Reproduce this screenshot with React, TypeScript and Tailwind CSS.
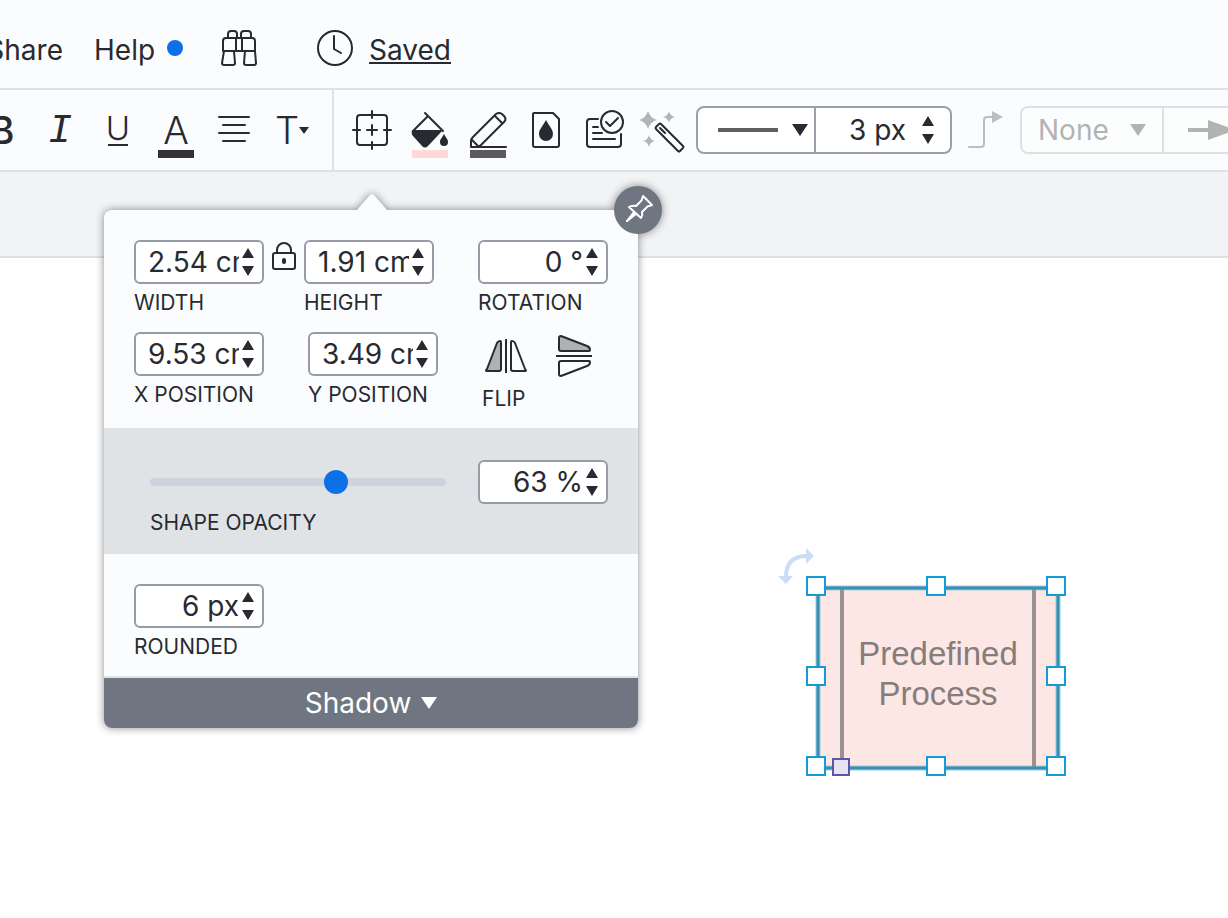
import React from 'react';

type IconProps = {
  children: React.ReactNode;
  width?: number;
  height?: number;
  className?: string;
};

const Icon: React.FC<IconProps> = ({ children, width = 48, height = 48, className }) => (
  <svg
    width={width}
    height={height}
    viewBox={`0 0 ${width} ${height}`}
    fill="none"
    stroke="currentColor"
    strokeWidth={2}
    strokeLinecap="round"
    strokeLinejoin="round"
    aria-hidden="true"
    className={`shrink-0 ${className ?? ''}`}
  >
    {children}
  </svg>
);

const Caret: React.FC<{ className?: string }> = ({ className }) => (
  <svg width={16} height={12} viewBox="0 0 16 12" aria-hidden="true" className={`shrink-0 ${className ?? ''}`}>
    <path d="M0 0h16L8 12z" fill="currentColor" />
  </svg>
);

const Stepper: React.FC<{ label: string }> = ({ label }) => (
  <div className="flex shrink-0 flex-col gap-2">
    <button type="button" aria-label={`Increase ${label}`}>
      <svg width={12} height={10} viewBox="0 0 12 10" className="block">
        <path d="M6 0l6 10H0z" fill="currentColor" />
      </svg>
    </button>
    <button type="button" aria-label={`Decrease ${label}`}>
      <svg width={12} height={10} viewBox="0 0 12 10" className="block">
        <path d="M0 0h12L6 10z" fill="currentColor" />
      </svg>
    </button>
  </div>
);

type FieldProps = {
  id: string;
  label: string;
  value: string;
  align?: 'left' | 'right';
  hideLabel?: boolean;
};

const Field: React.FC<FieldProps> = ({ id, label, value, align = 'left', hideLabel }) => (
  <div className="flex w-[130px] shrink-0 flex-col">
    <div className="flex h-11 items-center gap-[3px] rounded-md border-2 border-[#969ca7] bg-white pr-2 pl-3">
      <input
        id={id}
        type="text"
        defaultValue={value}
        aria-label={hideLabel ? label : undefined}
        className={`w-full min-w-0 bg-transparent outline-none ${align === 'right' ? 'text-right' : 'text-left'}`}
      />
      <Stepper label={label} />
    </div>
    {!hideLabel && (
      <label htmlFor={id} className="mt-[7px] text-[21px] leading-6 whitespace-nowrap uppercase">
        {label}
      </label>
    )}
  </div>
);

const ToolButton: React.FC<{ label: string; children: React.ReactNode }> = ({ label, children }) => (
  <button type="button" aria-label={label} className="flex h-20 w-[58px] shrink-0 items-start justify-center pt-4">
    {children}
  </button>
);

const Header: React.FC = () => (
  <header className="flex h-[90px] items-center overflow-hidden border-b-2 border-[#dfe1e4] bg-[#fbfcfe] pt-2">
    <nav className="flex shrink-0 items-center">
      <div className="flex w-16 justify-end overflow-hidden pr-px">
        <button type="button" className="pt-1">
          Share
        </button>
      </div>
      <button type="button" className="ml-[30px] flex items-center gap-3">
        <span className="pt-1">Help</span>
        <span className="size-4 rounded-full bg-[#0c70e8]" />
      </button>
    </nav>
    <button type="button" aria-label="Search" className="ml-8">
      <Icon>
        <path d="M13 14V10q0-3 3-3h3q3 0 3 3v4M26 14V10q0-3 3-3h4q3 0 3 3v4" />
        <path d="M8 27V17q0-3 3-3h26q3 0 3 3v10zM21 14v13M27 14v13" />
        <path d="M9 27L7 39q0 2 2 2h9q2 0 2-2l-1-12M30 27l-1 12q0 2 2 2h8q2 0 2-2l-1-12" />
      </Icon>
    </button>
    <Icon className="ml-12">
      <circle cx={24} cy={24} r={17} />
      <path d="M23 12v13l7 4" />
    </Icon>
    <a href="#saved" className="ml-2.5 pt-1 underline decoration-2 underline-offset-2">
      Saved
    </a>
  </header>
);

const Toolbar: React.FC = () => (
  <div className="flex h-[82px] overflow-hidden border-b-2 border-[#dfe1e4] bg-[#fbfcfe]">
    <div className="flex w-[334px] shrink-0 justify-end overflow-hidden border-r-2 border-[#dfe1e4] pr-[11px]">
      <ToolButton label="Bold">
        <span className="text-[38px] leading-[48px] font-medium">B</span>
      </ToolButton>
      <ToolButton label="Italic">
        <span className="font-['Liberation_Mono',monospace] text-[40px] leading-[52px] italic">I</span>
      </ToolButton>
      <ToolButton label="Underline">
        <span className="mt-1 flex h-9 w-5 justify-center border-b-2 border-current text-[33px] leading-9 font-[350]">
          U
        </span>
      </ToolButton>
      <ToolButton label="Text color">
        <span className="flex w-9 flex-col items-center">
          <span className="h-11 text-[38px] leading-[48px] font-[350]">A</span>
          <span className="h-2 w-full bg-[#333335]" />
        </span>
      </ToolButton>
      <ToolButton label="Align text">
        <Icon>
          <path d="M9 11h30M13 19h22M9 27h30M13 35h22" />
        </Icon>
      </ToolButton>
      <ToolButton label="Text options">
        <span className="flex items-center">
          <span className="text-[38px] leading-[48px] font-[350]">T</span>
          <svg width={10} height={7} viewBox="0 0 10 7">
            <path d="M0 0h10L5 7z" fill="currentColor" />
          </svg>
        </span>
      </ToolButton>
    </div>

    <div className="flex shrink-0 pl-[9px]">
      <ToolButton label="Size and position">
        <Icon>
          <rect x={9} y={9} width={30} height={30} rx={3} />
          <path d="M24 5v7M24 36v7M5 24h7M36 24h7M19 24h10M24 19v10" />
        </Icon>
      </ToolButton>
      <ToolButton label="Fill color">
        <Icon height={56}>
          <path d="M19 7l18 18M22 10L8 24" />
          <path d="M6 24h31L22 40q-3 3-6 0L7 30q-2-2-1-6z" fill="currentColor" stroke="none" />
          <path d="M38 28c2 4 4 5 4 8a4 4 0 0 1-8 0c0-3 2-4 4-8z" fill="currentColor" stroke="none" />
          <rect x={6} y={44} width={36} height={8} fill="#fdd9d7" stroke="none" />
        </Icon>
      </ToolButton>
      <ToolButton label="Line color">
        <Icon height={56}>
          <path d="M7 41V35q0-2 2-4L32 8q3-2 6 0l2 2q3 3 0 6L17 39q-2 2-4 2zM31 10l7 7M8 34l6 6M7 41h35" />
          <rect x={6} y={44} width={36} height={8} fill="#5b5b5b" stroke="none" />
        </Icon>
      </ToolButton>
      <ToolButton label="Shape style">
        <Icon>
          <path d="M12 7h19l6 6v26q0 2-2 2H13q-2 0-2-2V8q0-1 1-1z" />
          <path d="M24 14c3 6 7 9 7 14a7 7 0 0 1-14 0c0-5 4-8 7-14z" fill="currentColor" stroke="none" />
        </Icon>
      </ToolButton>
      <ToolButton label="Apply to all">
        <Icon>
          <path d="M18 13H10q-3 0-3 3v22q0 3 3 3h28q3 0 3-3V28" />
          <path d="M13 21h5M13 27h9M13 33h22" />
          <circle cx={32} cy={16} r={11} />
          <path d="M26 16l4 4 8-8" />
        </Icon>
      </ToolButton>
      <ToolButton label="Magic formatting">
        <Icon>
          <g fill="#b3b4b7" stroke="none">
            <path d="M10 5q2 7 9 9-7 2-9 9-2-7-9-9 7-2 9-9z" />
            <path d="M31 5q1 5 6 6-5 1-6 6-1-5-6-6 5-1 6-6z" />
            <path d="M11 29q1 5 6 6-5 1-6 6-1-5-6-6 5-1 6-6z" />
          </g>
          <path d="M18 23q-1-1 0-2l3-3q1-1 2 0l22 22q1 1 0 2l-3 3q-1 1-2 0zM22 22l5 5" />
        </Icon>
      </ToolButton>
    </div>

    <div className="mt-4 ml-[5px] flex h-12 w-64 shrink-0 rounded-lg border-2 border-[#9aa0ab] bg-white">
      <button
        type="button"
        aria-label="Line style"
        className="flex w-[118px] shrink-0 items-center justify-between border-r-2 border-[#9aa0ab] pr-1.5 pl-5"
      >
        <span className="h-1 w-[60px] bg-[#606060]" />
        <Caret />
      </button>
      <div className="flex min-w-0 flex-1 items-center gap-4 pr-4">
        <input
          type="text"
          defaultValue="3 px"
          aria-label="Line width"
          className="w-full min-w-0 bg-transparent text-right outline-none"
        />
        <Stepper label="line width" />
      </div>
    </div>

    <button type="button" aria-label="Line shape" className="mt-4 ml-3 shrink-0 self-start text-[#bcbdc0]">
      <Icon width={44}>
        <path d="M5 41h12q3 0 3-3V14q0-3 3-3h6" />
        <path d="M28 5l11 6-11 6z" fill="currentColor" stroke="none" />
      </Icon>
    </button>

    <div className="mt-4 ml-3 flex h-12 shrink-0 rounded-lg border-2 border-[#dfe0e4] bg-[#fcfdfd] text-[#b2b3b5]">
      <div className="relative flex items-center">
        <select
          aria-label="Line start"
          defaultValue="none"
          className="h-full w-[142px] appearance-none border-r-2 border-[#dfe0e4] bg-transparent pl-4 outline-none"
        >
          <option value="none">None</option>
          <option value="arrow">Arrow</option>
        </select>
        <Caret className="pointer-events-none absolute right-[18px]" />
      </div>
      <button type="button" aria-label="Line end" className="flex w-[140px] items-center pl-6">
        <svg width={50} height={20} viewBox="0 0 50 20">
          <path d="M0 8h20V0l28 10-28 10v-8H0z" fill="currentColor" />
        </svg>
      </button>
    </div>
  </div>
);

const SizePanel: React.FC = () => (
  <section
    aria-label="Size and position"
    className="absolute top-[38px] left-[104px] w-[534px] rounded-lg bg-[#fbfcfe] drop-shadow-[0_0_4px_rgba(0,0,0,0.45)]"
  >
    <svg width={32} height={16} viewBox="0 0 32 16" className="absolute -top-4 left-[252px]" aria-hidden="true">
      <path d="M1 16L14 1q2-2 4 0l13 15z" fill="#fbfcfe" />
    </svg>
    <button
      type="button"
      aria-label="Pin panel"
      className="absolute -top-6 -right-6 rounded-full bg-[#6f7682] text-white"
    >
      <Icon>
        <path d="M29 10l9 9-3 1q-1 0-2 1l-5 5q1 3-1 6L15 21q3-2 7-1l5-5q1-1 1-2zM21 27l-8 8" />
        <path d="M20 26l-7 9 9-7" />
      </Icon>
    </button>

    <div className="flex flex-col gap-[17px] px-[30px] pt-[30px] pb-[17px]">
      <div className="flex">
        <Field id="width" label="Width" value="2.54 cm" />
        <button type="button" aria-label="Lock aspect ratio" className="mx-2 self-start">
          <Icon width={24} height={32}>
            <rect x={1} y={13} width={22} height={16} rx={2} />
            <path d="M5 13v-3a7 7 0 0 1 14 0v3" />
            <rect x={10} y={18} width={4} height={6} rx={2} fill="currentColor" stroke="none" />
          </Icon>
        </button>
        <Field id="height" label="Height" value="1.91 cm" />
        <div className="ml-11">
          <Field id="rotation" label="Rotation" value="0 °" align="right" />
        </div>
      </div>
      <div className="flex gap-11">
        <Field id="x-position" label="X Position" value="9.53 cm" />
        <Field id="y-position" label="Y Position" value="3.49 cm" />
        <div role="group" aria-labelledby="flip-label">
          <div className="flex gap-5">
            <button type="button" aria-label="Flip horizontally">
              <Icon>
                <path d="M5 37L15 11q1-2 3-2 1 0 1 1v27q0 2-2 2H5q-2 0-0-2z" fill="#b0b1b4" />
                <path d="M24 7v34" strokeLinecap="butt" />
                <path d="M43 37L33 11q-1-2-3-2-1 0-1 1v27q0 2 2 2h12q2 0 0-2z" />
              </Icon>
            </button>
            <button type="button" aria-label="Flip vertically">
              <Icon>
                <path d="M11 4l26 10q3 1 3 4 0 1-1 1H11q-2 0-2-2V6q0-2 2-2z" fill="#b0b1b4" />
                <path d="M6 24h36" strokeLinecap="butt" />
                <path d="M11 44l26-10q3-1 3-4 0-1-1-1H11q-2 0-2 2v11q0 2 2 2z" />
              </Icon>
            </button>
          </div>
          <div id="flip-label" className="mt-[7px] text-[21px] leading-6 uppercase">
            Flip
          </div>
        </div>
      </div>
    </div>

    <div className="flex h-[126px] justify-between bg-[#dfe3e6] pt-8 pr-[30px] pl-[46px]">
      <div className="flex w-[296px] flex-col">
        <div className="relative flex h-11 items-center">
          <div className="h-2 w-full rounded-full bg-[#cdd3dc]" />
          <input
            id="opacity"
            type="range"
            min={0}
            max={100}
            defaultValue={63}
            className="absolute -inset-x-3 h-6 appearance-none bg-transparent outline-none [&::-webkit-slider-thumb]:size-6 [&::-webkit-slider-thumb]:appearance-none [&::-webkit-slider-thumb]:rounded-full [&::-webkit-slider-thumb]:bg-[#0c70e8]"
          />
        </div>
        <label htmlFor="opacity" className="mt-[7px] text-[21px] leading-6 uppercase">
          Shape opacity
        </label>
      </div>
      <Field id="opacity-value" label="Shape opacity" value="63 %" align="right" hideLabel />
    </div>

    <div className="px-[30px] pt-[30px] pb-[17px]">
      <Field id="rounded" label="Rounded" value="6 px" align="right" />
    </div>

    <button
      type="button"
      className="flex h-[52px] w-full items-center justify-center gap-2.5 rounded-b-lg border-t-2 border-[#dbe5e8] bg-[#6f7682] text-white"
    >
      Shadow
      <Caret />
    </button>
  </section>
);

const handles = [
  [30, 30],
  [150, 30],
  [270, 30],
  [30, 120],
  [270, 120],
  [30, 210],
  [150, 210],
  [270, 210],
];

const SelectedShape: React.FC = () => (
  <div className="absolute top-[384px] left-[786px] flex h-[240px] w-[304px] justify-center pt-[78px]">
    <svg width={304} height={240} viewBox="0 0 304 240" className="absolute inset-0 overflow-visible" aria-hidden="true">
      <g fill="#c9ddf6">
        <path d="M20-8l8 8-8 8z" />
        <path d="M-8 20h15l-7 8z" />
      </g>
      <path d="M0 21Q0 0 21 0" fill="none" stroke="#c9ddf6" strokeWidth={4} />
      <rect x={32} y={32} width={240} height={180} fill="#fce7e5" stroke="#9fcbdc" strokeWidth={5} />
      <path d="M56 32v180M248 32v180" stroke="#9a9190" strokeWidth={4} />
      <rect x={32} y={32} width={240} height={180} fill="none" stroke="#378fb1" strokeWidth={3} />
      {handles.map(([x, y]) => (
        <rect
          key={`${x}-${y}`}
          x={x - 9}
          y={y - 9}
          width={18}
          height={18}
          fill="#fdfeff"
          stroke="#149bd7"
          strokeWidth={2}
        />
      ))}
      <rect x={47} y={203} width={16} height={16} fill="#e5e4f3" stroke="#5f55a5" strokeWidth={2} />
    </svg>
    <p className="relative text-center font-['Liberation_Sans',sans-serif] text-[33px] leading-10 text-[#867c7b]">
      Predefined
      <br />
      Process
    </p>
  </div>
);

export default function App() {
  return (
    <div className="flex min-h-screen flex-col overflow-hidden bg-white font-['Inter',sans-serif] text-[28px] leading-[34px] text-[#282a31]">
      <Header />
      <Toolbar />
      <main className="relative min-h-[746px] flex-1">
        <div className="h-[86px] border-b-2 border-[#dfe0e2] bg-[#f2f3f5]" />
        <SelectedShape />
        <SizePanel />
      </main>
    </div>
  );
}
